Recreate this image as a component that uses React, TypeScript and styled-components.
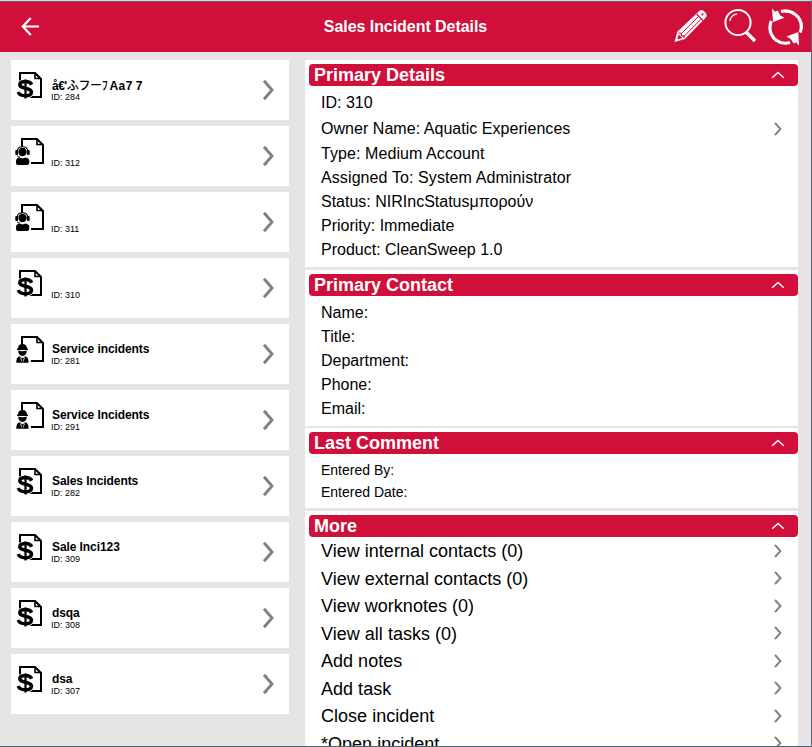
import React from 'react';
import styled, { createGlobalStyle } from 'styled-components';

const RED = '#d00f3a';

const GlobalStyle = createGlobalStyle`
  html, body { margin: 0; padding: 0; overflow: hidden; }
  body { font-family: "Liberation Sans", "Noto Sans CJK JP", Arial, sans-serif; color: #000; }
  * { box-sizing: border-box; }
  svg { display: block; flex: none; }
  button { font: inherit; border: 0; padding: 0; background: none; color: inherit; }
`;

const Window = styled.div`
  width: 812px;
  height: 747px;
  display: flex;
  flex-direction: column;
  overflow: hidden;
  background: #e5e5e5;
  border-top: 1px solid #d5dbe3;
  border-right: 1px solid #5c6670;
  border-bottom: 1px solid #55616f;
`;

const Header = styled.header`
  flex: none;
  height: 51px;
  display: grid;
  grid-template-columns: 150px 1fr 150px;
  align-items: center;
  background: ${RED};
  border-top: 1px solid #6e5965;
  color: #fff;
`;

const Title = styled.h1`
  margin: 0;
  text-align: center;
  font-size: 16px;
  line-height: 20px;
  letter-spacing: -0.05px;
`;

const BackButton = styled.button`
  margin-left: 20px;
  width: 22px;
  height: 22px;
`;

const Actions = styled.div`
  display: flex;
  gap: 11px;
  padding-left: 12px;
`;

const Content = styled.main`
  flex: 1;
  min-height: 0;
  display: flex;
  padding: 8px 13px 0 11px;
  gap: 16px;
`;

const List = styled.nav`
  width: 278px;
  flex: none;
  display: flex;
  flex-direction: column;
  gap: 6px;
`;

const Card = styled.div`
  height: 60px;
  flex: none;
  display: flex;
  align-items: flex-start;
  background: #fff;
  padding: 10px 14px 0 4px;
`;

const CardText = styled.div`
  flex: 1;
  margin: 9px 0 0 6px;
`;

const CardName = styled.div`
  height: 13px;
  padding-left: 1px;
  font-size: 12px;
  font-weight: bold;
  line-height: 13px;
  letter-spacing: -0.08px;
  white-space: pre;
`;

const MixedNames = styled.div`
  padding-top: 1px;
`;

const MixedName = styled.span<{ $spacing?: number; $weight?: number }>`
  font-weight: ${(p) => p.$weight ?? 700};
  letter-spacing: ${(p) => p.$spacing ?? 0}px;
`;

const CardId = styled.div`
  font-size: 9px;
  line-height: 11px;
`;

const CardChevron = styled.div`
  margin-top: 9px;
`;

const Detail = styled.div`
  flex: 1;
  min-width: 0;
  display: flex;
  flex-direction: column;
`;

const Section = styled.section<{ $height: number; $gap: number }>`
  flex: none;
  height: ${(p) => p.$height}px;
  margin-bottom: ${(p) => p.$gap}px;
  padding-top: 4px;
  background: #fff;
`;

const Bar = styled.div`
  height: 22px;
  margin-left: 4px;
  padding: 0 13px 0 5px;
  display: flex;
  align-items: center;
  justify-content: space-between;
  border-radius: 4px;
  background: ${RED};
  color: #fff;
`;

const BarTitle = styled.h2`
  margin: 0;
  font-size: 18px;
  line-height: 22px;
`;

const Fields = styled.div<{ $top: number }>`
  padding: ${(p) => p.$top}px 15px 0 16px;
`;

const Row = styled.div<{ $height: number; $size: number; $spacing?: number }>`
  height: ${(p) => p.$height}px;
  display: flex;
  align-items: center;
  justify-content: space-between;
  font-size: ${(p) => p.$size}px;
  letter-spacing: ${(p) => p.$spacing ?? 0}px;
  white-space: nowrap;
`;

const LinkLabel = styled.span`
  padding-top: 2px;
`;

const DocOutline = ({ x }: { x: number }) => (
  <g fill="none" stroke="#000" strokeWidth="2">
    <path d={`M${x + 1} 11V3H${x + 16}L${x + 22} 9V27H${x + 10}`} />
    <path d={`M${x + 16} 3V8.5H${x + 22}`} strokeWidth="1.6" />
  </g>
);

const SalesIcon = () => (
  <svg width="30" height="30" viewBox="0 0 30 30">
    <DocOutline x={4} />
    <path d="M16.5 14.6C14.5 11.4 5 11.4 5 15.2C5 19.6 16 17.2 16 22.2C16 26.2 6 26.6 4.2 22.2M10.4 9.5V27" fill="none" stroke="#fff" strokeWidth="6" />
    <path d="M16.8 14.6C14.4 10.2 4.8 10.6 4.8 14.8C4.8 19.4 16.5 17.2 16.5 22.3C16.5 27 5 27 3.2 22" fill="none" stroke="#000" strokeWidth="3.5" />
    <path d="M10.5 9.5V28.5" stroke="#000" strokeWidth="2.2" />
  </svg>
);

const AgentIcon = () => (
  <svg width="30" height="30" viewBox="0 0 30 30">
    <DocOutline x={6} />
    <circle cx="7.5" cy="16" r="4.2" />
    <path d="M2.3 15C2.6 9.3 12.4 9.3 12.7 15" fill="none" stroke="#000" strokeWidth="1.2" />
    <rect x="0.3" y="14" width="2.7" height="5" rx="1" />
    <rect x="12" y="14" width="2.7" height="5" rx="1" />
    <path d="M2 19.5Q3 21 5 21.2" fill="none" stroke="#000" />
    <path d="M1 27.5V25Q1 22 4.5 21.5L7.5 22.5L10.5 21.5Q14.3 22 14.3 25V27.5Q13.5 29 11.5 29H3.5Q1.5 29 1 27.5Z" />
  </svg>
);

const ServiceIcon = () => (
  <svg width="30" height="30" viewBox="0 0 30 30">
    <DocOutline x={6} />
    <path d="M3 14.5Q3.2 10 7.5 10Q11.8 10 12 14.5H13V16H2V14.5Z" />
    <path d="M3.2 16.6Q7.5 17.8 11.8 16.6Q11.8 21.6 7.5 22Q3.2 21.6 3.2 16.6Z" />
    <path d="M1.3 28.8Q1 23.2 4.7 22.3L7.5 24.5L10.3 22.3Q13.8 23.2 13.5 28.8Z" />
    <path d="M5.3 23.5L7.5 28.2L9.7 23.5" fill="none" stroke="#fff" strokeWidth="0.8" />
    <path d="M7.5 24.5V28" stroke="#000" />
  </svg>
);

const BackIcon = () => (
  <svg width="22" height="22" viewBox="0 0 22 22" fill="none" stroke="#fff" strokeWidth="2.2">
    <path d="M19 10.5H3M10.8 2L2.8 10.5L10.8 19" />
  </svg>
);

const PencilIcon = () => (
  <svg width="36" height="36" viewBox="0 0 36 36">
    <path d="M1.5 34L4.3 23.8L26 3.2Q28.3 1 30.7 3L32.5 4.8Q34.8 7.2 32.6 9.8L12 31Z" fill="#fff" />
    <path d="M8.5 25.5L25.2 8.8M11.3 28L28 11.3" stroke={RED} strokeWidth="1" />
    <path d="M23.5 6L30 12.5M5.5 25L8.2 25.2L8.5 27.7L11 28.1L11.2 30" fill="none" stroke={RED} strokeWidth="1.2" />
    <path d="M5.7 26.5L9.3 30L5 31.2L4.4 30.7Z" fill={RED} />
    <circle cx="29.4" cy="6.4" r="1.1" fill={RED} />
  </svg>
);

const SearchIcon = () => (
  <svg width="36" height="36" viewBox="0 0 36 36" fill="none" stroke="#fff">
    <circle cx="18" cy="14.5" r="12.6" strokeWidth="2" />
    <path d="M9.8 13Q11 7 17 5.9" strokeWidth="1.3" />
    <path d="M26 24L35 33" strokeWidth="3.4" />
  </svg>
);

const RefreshIcon = () => (
  <svg width="36" height="38" viewBox="0 0 36 38">
    <g fill="none" stroke="#fff" strokeWidth="3.2">
      <path d="M14 3.5C24 1 34.5 8 34.4 19Q34.2 22 33 24.5" />
      <path d="M23 34.5C13 37.5 3 30.5 2.9 19.2Q3 15.7 4.4 13" />
    </g>
    <path d="M5 0.5L6 14L17.5 9.8L13.3 7.5L10.7 2.6L8 3.8Z" fill="#fff" />
    <path d="M32 37.5L31.3 24L19.6 28.5L23.7 31L26.7 35.6L29 34.2Z" fill="#fff" />
  </svg>
);

const LargeChevron = () => (
  <svg width="14" height="22" viewBox="0 0 14 22" fill="none" stroke="#808080" strokeWidth="2.9">
    <path d="M3 1.8L11 11L3 20.2" />
  </svg>
);

const SmallChevron = () => (
  <svg width="10" height="14" viewBox="0 0 10 14" fill="none" stroke="#808080" strokeWidth="1.9">
    <path d="M2 1L7.5 7L2 13" />
  </svg>
);

const UpChevron = () => (
  <svg width="14" height="8" viewBox="0 0 14 8" fill="none" stroke="#fff" strokeWidth="1.5">
    <path d="M1.2 6.7L7 1.4L12.8 6.7" />
  </svg>
);

const icons = { sales: SalesIcon, agent: AgentIcon, service: ServiceIcon };

type Incident = { kind: keyof typeof icons; name: React.ReactNode; id: number };

const incidents: Incident[] = [
  {
    kind: 'sales',
    name: (
      <MixedNames>
        <MixedName $spacing={-0.5}>å€'</MixedName>
        <MixedName $weight={500} $spacing={-0.3}>ふフー</MixedName>
        <MixedName $weight={500} $spacing={1.6}>ﾌ</MixedName>
        <MixedName $spacing={0.5}>Aa7</MixedName>
        <MixedName $spacing={-0.5}> 7</MixedName>
      </MixedNames>
    ),
    id: 284,
  },
  { kind: 'agent', name: '', id: 312 },
  { kind: 'agent', name: '', id: 311 },
  { kind: 'sales', name: '', id: 310 },
  { kind: 'service', name: 'Service incidents', id: 281 },
  { kind: 'service', name: 'Service Incidents', id: 291 },
  { kind: 'sales', name: 'Sales Incidents', id: 282 },
  { kind: 'sales', name: 'Sale Inci123', id: 309 },
  { kind: 'sales', name: 'dsqa', id: 308 },
  { kind: 'sales', name: 'dsa', id: 307 },
];

const moreItems = [
  'View internal contacts (0)',
  'View external contacts (0)',
  'View worknotes (0)',
  'View all tasks (0)',
  'Add notes',
  'Add task',
  'Close incident',
  '*Open incident',
];

const SectionBar = ({ title }: { title: string }) => (
  <Bar>
    <BarTitle>{title}</BarTitle>
    <UpChevron />
  </Bar>
);

export default function App() {
  return (
    <>
      <GlobalStyle />
      <Window>
        <Header>
          <BackButton aria-label="Back"><BackIcon /></BackButton>
          <Title>Sales Incident Details</Title>
          <Actions>
            <PencilIcon />
            <SearchIcon />
            <RefreshIcon />
          </Actions>
        </Header>
        <Content>
          <List>
            {incidents.map(({ kind, name, id }) => {
              const Icon = icons[kind];
              return (
                <Card key={id}>
                  <Icon />
                  <CardText>
                    <CardName>{name}</CardName>
                    <CardId>ID: {id}</CardId>
                  </CardText>
                  <CardChevron><LargeChevron /></CardChevron>
                </Card>
              );
            })}
          </List>
          <Detail>
            <Section $height={207} $gap={3}>
              <SectionBar title="Primary Details" />
              <Fields $top={5}>
                <Row $height={24} $size={16}>ID: 310</Row>
                <Row $height={28} $size={16} $spacing={0.04}>Owner Name: Aquatic Experiences<SmallChevron /></Row>
                <Row $height={22} $size={16} $spacing={0.08}>Type: Medium Account</Row>
                <Row $height={25} $size={16} $spacing={0.1}>Assigned To: System Administrator</Row>
                <Row $height={24} $size={16}>Status: NIRIncStatusμπορούν</Row>
                <Row $height={24} $size={16}>Priority: Immediate</Row>
                <Row $height={24} $size={16}>Product: CleanSweep 1.0</Row>
              </Fields>
            </Section>
            <Section $height={156} $gap={2}>
              <SectionBar title="Primary Contact" />
              <Fields $top={5}>
                {['Name:', 'Title:', 'Department:', 'Phone:', 'Email:'].map((label) => (
                  <Row key={label} $height={24} $size={16}>{label}</Row>
                ))}
              </Fields>
            </Section>
            <Section $height={80} $gap={3}>
              <SectionBar title="Last Comment" />
              <Fields $top={5}>
                <Row $height={22} $size={14}>Entered By:</Row>
                <Row $height={22} $size={14}>Entered Date:</Row>
              </Fields>
            </Section>
            <Section $height={247} $gap={0}>
              <SectionBar title="More" />
              <Fields $top={0}>
                {moreItems.map((item) => (
                  <Row key={item} $height={27.5} $size={18} $spacing={0.02}>
                    <LinkLabel>{item}</LinkLabel>
                    <SmallChevron />
                  </Row>
                ))}
              </Fields>
            </Section>
          </Detail>
        </Content>
      </Window>
    </>
  );
}
